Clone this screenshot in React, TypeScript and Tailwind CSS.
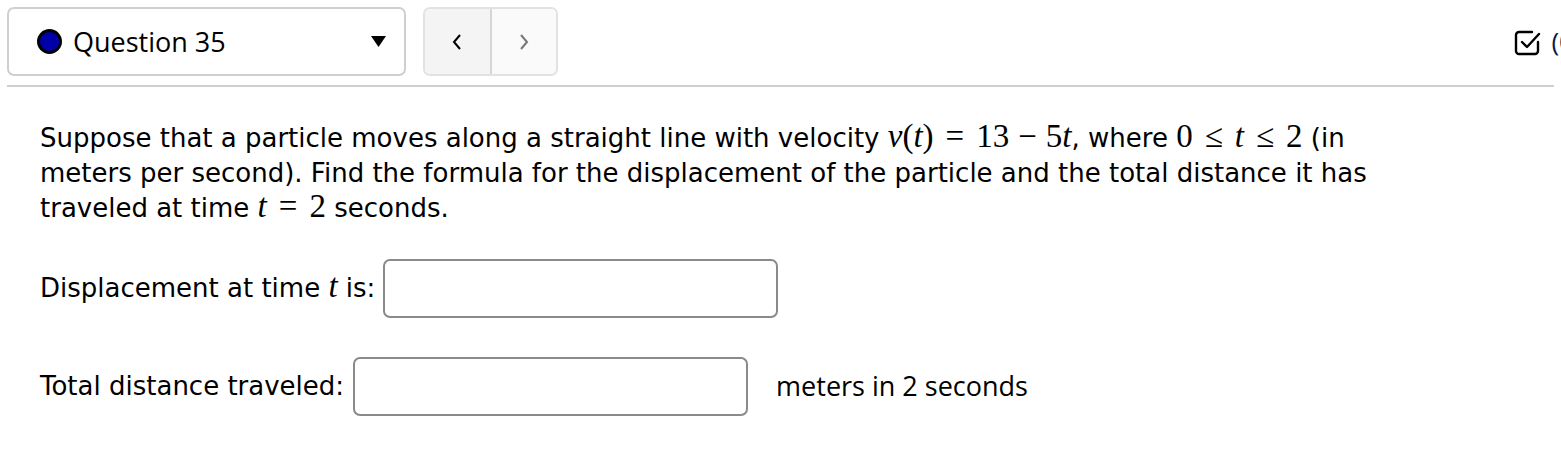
import React from 'react'

const mathFont = { fontFamily: '"Liberation Serif", "DejaVu Serif", serif' }

function M({ children, italic }: { children: React.ReactNode; italic?: boolean }) {
  return (
    <span className={`text-[33px] leading-none ${italic ? 'italic' : ''}`} style={mathFont}>
      {children}
    </span>
  )
}

// relation / binary operator with KaTeX-like spacing
function Op({ children, wide }: { children: React.ReactNode; wide?: boolean }) {
  return (
    <span className={`text-[33px] leading-none ${wide ? 'mx-[12px]' : 'mx-[9px]'}`} style={mathFont}>
      {children}
    </span>
  )
}

export default function App() {
  const input = 'h-[59px] rounded-[7px] border-2 border-[#8a8a8a] bg-white'

  return (
    <div className="h-[458px] w-[1561px] overflow-hidden bg-white text-black">
      <div className="flex items-center gap-[17px] px-[7px] pt-[7px]">
        <div className="flex h-[69px] w-[399px] items-center rounded-[7px] border-2 border-[#cfcfcf] pl-[28px] pr-[18px]">
          <span className="h-[25px] w-[25px] rounded-full border-[3px] border-black bg-[#0000a8]" />
          <span
            className="ml-[11px] text-[27px] leading-none"
            style={{ fontFamily: '"Open Sans", "Noto Sans", sans-serif' }}
          >
            Question 35
          </span>
          <svg className="ml-auto" width="15" height="11" viewBox="0 0 15 11">
            <path d="M0 0h15L7.5 11z" fill="#000" />
          </svg>
        </div>
        <div className="flex h-[69px] w-[135px] overflow-hidden rounded-[7px] border-2 border-[#e2e2e2]">
          <button className="flex flex-1 items-center justify-center border-r-2 border-[#d6d6d6] bg-[#f4f4f4]">
            <svg width="12" height="18" viewBox="0 0 12 18">
              <path d="M9 2 3 9l6 7" fill="none" stroke="#000" strokeWidth="2" />
            </svg>
          </button>
          <button className="flex flex-1 items-center justify-center bg-[#fafafa]">
            <svg width="12" height="18" viewBox="0 0 12 18">
              <path d="M3 2l6 7-6 7" fill="none" stroke="#777" strokeWidth="2" />
            </svg>
          </button>
        </div>
        <div className="ml-auto mr-[-52px] flex items-center gap-[9px]">
          <svg width="28" height="28" viewBox="0 0 28 28" className="mt-[2px]">
            <path
              d="M24 13v9a3 3 0 0 1-3 3H5a3 3 0 0 1-3-3V6a3 3 0 0 1 3-3h13"
              fill="none"
              stroke="#000"
              strokeWidth="2.4"
              strokeLinecap="round"
            />
            <path
              d="m8 13 5 5L25 5"
              fill="none"
              stroke="#000"
              strokeWidth="2.4"
              strokeLinecap="round"
              strokeLinejoin="round"
            />
          </svg>
          <span
            className="whitespace-nowrap text-[26px] text-[#0a1a4a]"
            style={{ fontFamily: '"Open Sans", sans-serif' }}
          >
            (0/2)
          </span>
        </div>
      </div>
      <div className="mx-[7px] mt-[9px] h-[2px] bg-[#cfcfcf]" />

      <div
        className="px-[40px] pt-[33px] text-[26px]"
        style={{ fontFamily: '"DejaVu Sans", sans-serif' }}
      >
        <p className="leading-[34px]">
          <span className="inline-block pb-[1px]">
            Suppose that a particle moves along a straight line with velocity <M italic>v</M>
            <M>(</M>
            <M italic>t</M>
            <M>)</M>
            <Op wide>=</Op>
            <M>13</M>
            <Op>−</Op>
            <M>5</M>
            <M italic>t</M>, where <M>0</M>
            <Op wide>≤</Op>
            <M italic>t</M>
            <Op wide>≤</Op>
            <M>2</M> (in
          </span>
          <br />
          meters per second). Find the formula for the displacement of the particle and the total distance it has
          <br />
          traveled at time <M italic>t</M>
          <Op wide>=</Op>
          <M>2</M> seconds.
        </p>

        <div className="mt-[34px] flex items-center gap-[8px]">
          <span>
            Displacement at time <M italic>t</M> is:
          </span>
          <div className={`${input} w-[395px]`} />
        </div>

        <div className="mt-[39px] flex items-center">
          <span>Total distance traveled:</span>
          <div className={`${input} ml-[9px] w-[395px]`} />
          <span
            className="ml-[28px] text-[27px]"
            style={{ fontFamily: '"Open Sans", "Noto Sans", sans-serif' }}
          >
            meters in 2 seconds
          </span>
        </div>
      </div>
    </div>
  )
}
